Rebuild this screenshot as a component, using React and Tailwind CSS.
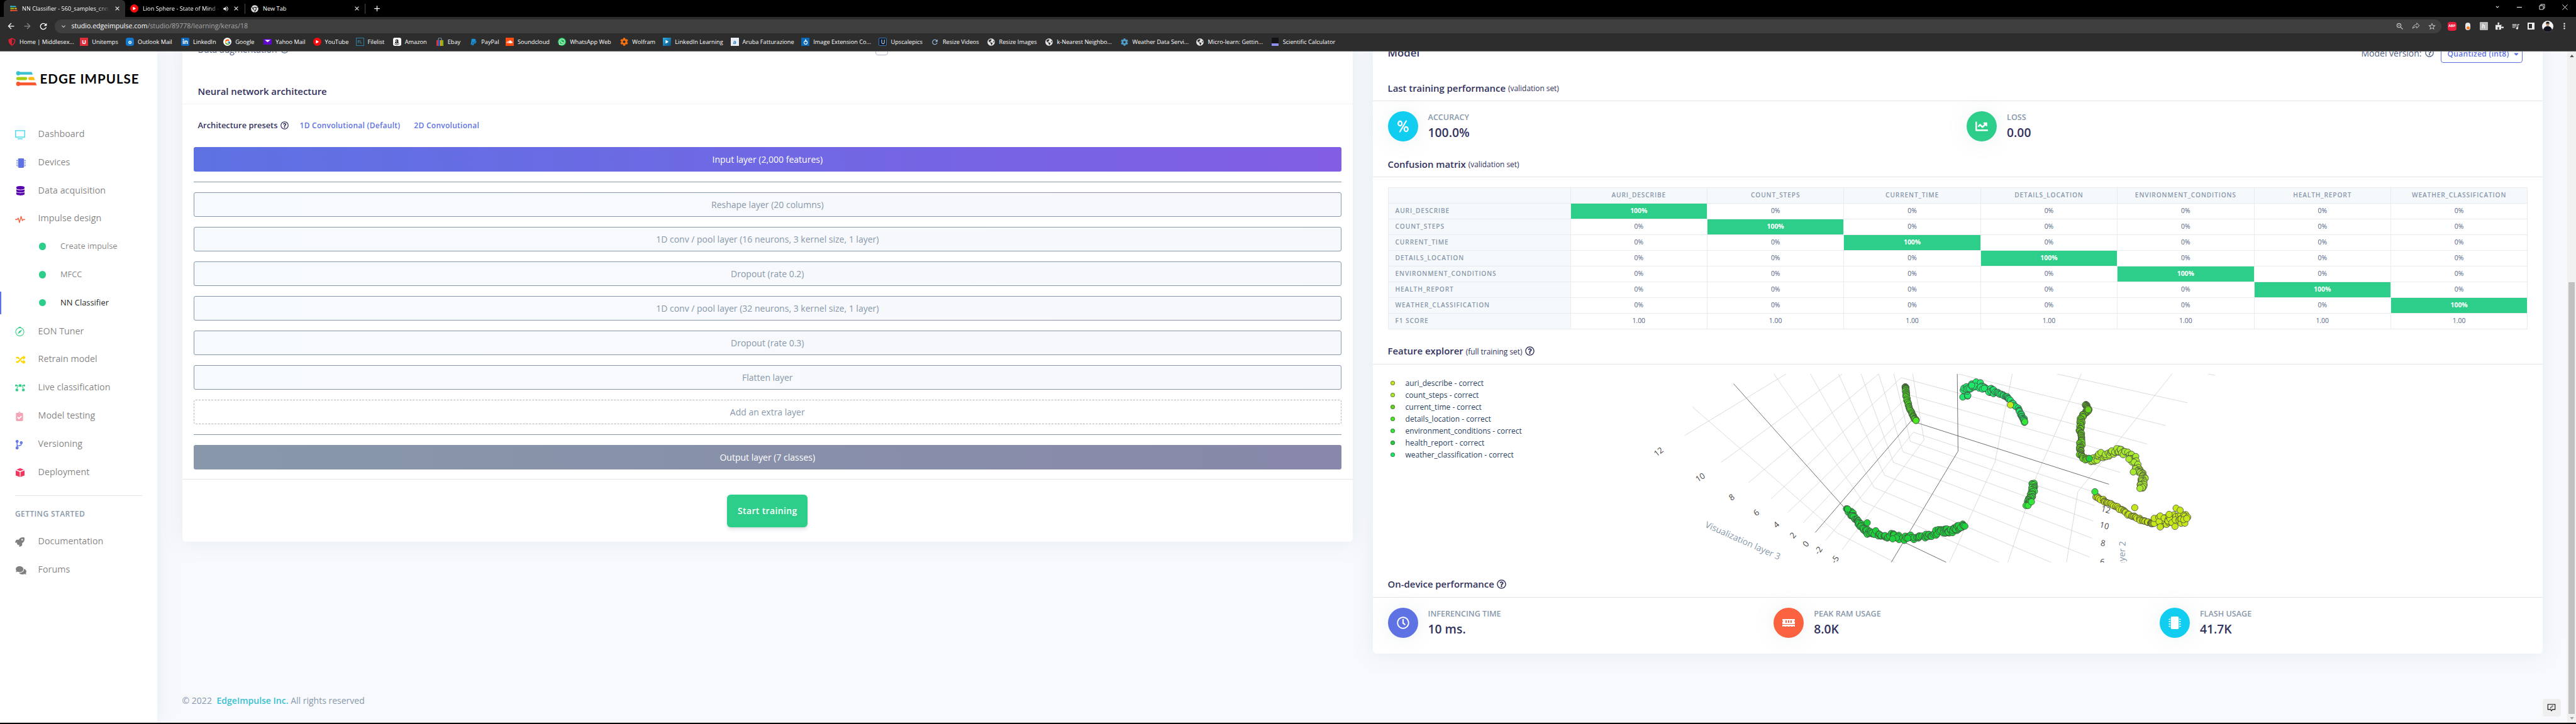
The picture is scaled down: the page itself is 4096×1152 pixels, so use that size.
import React from "react";
import {
  FaChartLine, FaRegClock, FaMemory, FaMicrochip, FaDatabase, FaRandom, FaRocket,
  FaClipboardCheck, FaCodeBranch, FaComments, FaChrome, FaPaypal, FaSoundcloud,
  FaWhatsapp, FaLinkedinIn, FaAmazon, FaPlay, FaGlobeAmericas, FaRegQuestionCircle, FaShieldAlt,
  FaPuzzlePiece, FaCaretDown, FaBezierCurve, FaCog,
} from "react-icons/fa";
import { FcGoogle } from "react-icons/fc";
import { BsCompass } from "react-icons/bs";
import {
  MdArrowBack, MdArrowForward, MdRefresh, MdZoomIn, MdStarBorder, MdQueueMusic, MdMoreVert,
  MdVolumeUp, MdClose, MdAdd, MdKeyboardArrowDown,
} from "react-icons/md";
import { PiShareFat } from "react-icons/pi";

/* ---------- browser chrome ---------- */

function EdgeGlyph({ className }) {
  return (
    <svg viewBox="0 0 42 30" preserveAspectRatio="none" className={className}>
      <circle cx="5" cy="4.5" r="4.2" fill="#3bc1cf" />
      <path d="M5 2h27l2 5.3H5z" fill="#3bc1cf" />
      <rect x="1" y="12" width="22" height="6" rx="3" fill="#a6cf13" />
      <path d="M28 12h8l2.3 6H28a3 3 0 0 1 0-6z" fill="#feb912" />
      <circle cx="5" cy="25.5" r="4.2" fill="#fb552e" />
      <path d="M5 22.8h34.5l2.5 5.6H5z" fill="#fb552e" />
    </svg>
  );
}

const Sq = ({ c, t, children }) => (
  <span className={"flex h-[13px] w-[13px] items-center justify-center text-[9px] leading-none font-bold text-white " + c}>
    {t}
    {children}
  </span>
);

const bookmarks = [
  { n: "Home | Middlesex...", x: 15, i: <FaShieldAlt className="h-[13px] w-[12px] text-[#dc1f34]" /> },
  { n: "Unitemps", x: 159, i: <Sq c="bg-[#e12d3a]" t="U" /> },
  { n: "Outlook Mail", x: 250, i: <Sq c="bg-[#1279cf] rounded-sm" t="o" /> },
  { n: "LinkedIn", x: 360, i: <Sq c="bg-[#0f6ac0] rounded-[2px]"><FaLinkedinIn /></Sq> },
  { n: "Google", x: 444, i: <span className="flex h-[13px] w-[13px] items-center justify-center rounded-full bg-white"><FcGoogle className="h-[10px] w-[10px]" /></span> },
  { n: "Yahoo Mail", x: 524, i: <svg viewBox="0 0 13 13" className="h-[13px] w-[13px]"><path d="M0 2h13v9H0z" fill="#5f07cf" /><path d="M2 3.500h9L6.500 7z" fill="#fff" /></svg> },
  { n: "YouTube", x: 622, i: <Sq c="bg-[#f60c0c] rounded-full"><FaPlay className="h-[5px] w-[5px]" /></Sq> },
  { n: "Filelist", x: 707, i: <span className="flex h-[13px] w-[13px] items-center justify-center border border-[#2c7ea8] text-[7px] leading-none text-[#46a0cc]">FL</span> },
  { n: "Amazon", x: 781, i: <span className="flex h-[13px] w-[13px] items-center justify-center rounded-[3px] bg-white text-black"><FaAmazon className="h-[10px] w-[10px]" /></span> },
  { n: "Ebay", x: 866, i: <svg viewBox="0 0 13 13" className="h-[13px] w-[13px]"><path d="M1 4h3v9H1z" fill="#e53238" /><path d="M4 4h3v9H4z" fill="#0a64d2" /><path d="M7 4h2.500v9H7z" fill="#f5af02" /><path d="M9.500 4H12v9H9.500z" fill="#86b817" /><path d="M4 4V2.500a2.500 2.500 0 0 1 5 0V4" fill="none" stroke="#9ab" /></svg> },
  { n: "PayPal", x: 933, i: <FaPaypal className="h-[12px] w-[12px] text-[#1a8fd8]" /> },
  { n: "Soundcloud", x: 1005, i: <Sq c="bg-[#ff4c10]"><FaSoundcloud className="h-[9px] w-[10px]" /></Sq> },
  { n: "WhatsApp Web", x: 1109, i: <Sq c="bg-[#1fc15a] rounded-full"><FaWhatsapp className="h-[11px] w-[11px]" /></Sq> },
  { n: "Wolfram", x: 1233, i: <FaCog className="h-[13px] w-[13px] text-[#f4700e]" /> },
  { n: "LinkedIn Learning", x: 1318, i: <Sq c="bg-gradient-to-br from-[#2fb1e8] to-[#0b4f7c]"><FaPlay className="h-[5px] w-[5px]" /></Sq> },
  { n: "Aruba Fatturazione", x: 1452, i: <span className="flex h-[13px] w-[13px] items-center justify-center bg-[#e8eef4] text-[9px] leading-none font-bold text-[#2a83c0]">a</span> },
  { n: "Image Extension Co...", x: 1593, i: <Sq c="bg-[#0968b8]"><svg viewBox="0 0 10 10" className="h-[10px] w-[10px]"><circle cx="5" cy="5.800" r="2.600" fill="none" stroke="#fff" strokeWidth="1.200" /><path d="M5 .5v4" stroke="#fff" strokeWidth="1.400" /></svg></Sq> },
  { n: "Upscalepics", x: 1747, i: <span className="flex h-[13px] w-[13px] items-center justify-center rounded-[2px] border border-[#3e78b4] bg-[#0c1a2c] text-[9px] leading-none text-white">U</span> },
  { n: "Resize Videos", x: 1850, i: <MdRefresh className="h-[14px] w-[13px] text-[#9ec4ea]" /> },
  { n: "Resize Images", x: 1962, i: <FaGlobeAmericas className="h-[12px] w-[12px] text-[#e4e4e4]" /> },
  { n: "k-Nearest Neighbo...", x: 2077, i: <FaGlobeAmericas className="h-[12px] w-[12px] text-[#e4e4e4]" /> },
  { n: "Weather Data Servi...", x: 2227, i: <FaCog className="h-[12px] w-[12px] text-[#4f9dcb]" /> },
  { n: "Micro-learn: Gettin...", x: 2377, i: <FaGlobeAmericas className="h-[12px] w-[12px] text-[#e4e4e4]" /> },
  { n: "Scientific Calculator", x: 2526, i: <svg viewBox="0 0 13 13" className="h-[13px] w-[13px]"><rect x="1" width="11" height="13" rx="1" fill="#141418" /><rect x="1" y="9" width="11" height="4" fill="#8f8ff0" /></svg> },
];

function BrowserChrome() {
  return (
    <header className="h-[82.4px] w-full shrink-0 border-b border-[#6b6b6b] bg-[#2d2d2d] text-white">
      <div className="flex h-[27.2px] items-center justify-between bg-black text-[9.200px]">
        <div className="flex h-full items-center">
          <div className="ml-[6px] flex h-full w-[193px] items-center rounded-t-md bg-[#2d2d2d] pl-[10px]">
            <EdgeGlyph className="h-[9px] w-[12px]" />
            <span className="ml-[7px] w-[140px] overflow-hidden whitespace-nowrap [mask-image:linear-gradient(90deg,#000_85%,transparent)]">NN Classifier - 560_samples_cnn_</span>
            <MdClose className="ml-[6px] h-[11px] w-[11px]" />
          </div>
          <div className="flex h-full w-[190px] items-center pl-[8px]">
            <Sq c="bg-[#f60c0c] rounded-full"><FaPlay className="h-[5px] w-[5px]" /></Sq>
            <span className="ml-[7px] w-[123px] overflow-hidden whitespace-nowrap [mask-image:linear-gradient(90deg,#000_85%,transparent)]">Lion Sphere - State of Mind -</span>
            <MdVolumeUp className="ml-[4px] h-[10px] w-[10px]" />
            <MdClose className="ml-[6px] h-[11px] w-[11px]" />
          </div>
          <div className="flex h-[16px] w-[192px] items-center border-x border-[#4b4b4b] pl-[9px]">
            <FaChrome className="h-[12px] w-[12px] text-[#dcdcdc]" />
            <span className="ml-[7px] w-[144px]">New Tab</span>
            <MdClose className="h-[11px] w-[11px]" />
          </div>
          <MdAdd className="ml-[11px] h-[15px] w-[15px]" />
        </div>
        <div className="flex h-full items-center gap-[26.8px] pr-[13px] pb-[5px]">
          <MdKeyboardArrowDown className="h-[12px] w-[10px]" />
          <span className="h-px w-[8px] bg-white" />
          <svg viewBox="0 0 10 10" className="h-[10px] w-[10px]" fill="none" stroke="#fff" strokeWidth=".9"><path d="M1 3h6v6H1zM3 3V1h6v6H7" /></svg>
          <svg viewBox="0 0 10 10" className="h-[9px] w-[9px]" stroke="#fff"><path d="M.5.5l9 9M9.500.5l-9 9" /></svg>
        </div>
      </div>
      <div className="flex h-[29.6px] items-center">
        <div className="flex w-[87px] shrink-0 items-center gap-[10.500px] pl-[10px]">
          <MdArrowBack className="h-[15px] w-[15px]" />
          <MdArrowForward className="h-[15px] w-[15px] text-[#8a8a8a]" />
          <MdRefresh className="h-[16px] w-[16px]" />
        </div>
        <div className="flex h-[22.4px] w-[3795px] shrink-0 items-center rounded-full bg-[#3f3f3f] pl-[8px] text-[10.600px]">
          <MdKeyboardArrowDown className="h-[12px] w-[12px] text-[#ccc]" />
          <span className="ml-[6.500px] w-[300px] whitespace-nowrap text-[#a8a8a8]"><span className="text-white">studio.edgeimpulse.com</span>/studio/89778/learning/keras/18</span>
          <div className="ml-auto flex items-center gap-[12.200px] pr-[8px] text-[#c4c4c4]">
            <MdZoomIn className="h-[14px] w-[14px]" />
            <PiShareFat className="h-[13px] w-[13px]" />
            <MdStarBorder className="h-[14px] w-[14px]" />
          </div>
        </div>
        <div className="flex items-center gap-[12px] pl-[10px] text-[#e6e6e6]">
          <span className="flex h-[13.500px] w-[13.500px] items-center justify-center rounded-[4px] bg-[#ee1c3d] text-[5.500px] leading-none font-bold text-white">ABP</span>
          <span className="flex h-[13px] w-[13px] items-center justify-center"><span className="flex h-[12px] w-[8px] items-end justify-center rounded-full bg-[#e8e8e8] pb-px"><span className="h-[5px] w-[5px] rounded-full bg-[#f47c20]" /></span></span>
          <span className="flex h-[13px] w-[13px] items-center justify-center rounded-[1px] bg-[#b9b9b9] font-serif text-[11px] leading-none text-white italic">h</span>
          <FaPuzzlePiece className="h-[13px] w-[13px]" />
          <MdQueueMusic className="h-[16px] w-[14px]" />
          <span className="h-[11px] w-[11.500px] border-2 border-r-[4px] border-[#efefef]" />
          <svg viewBox="0 0 18 18" className="h-[18px] w-[18px]">
            <circle cx="9" cy="9" r="9" fill="#f4f2f2" />
            <path d="M2 14.500c1-4 4-6 7-6s6 2 7 6a9 9 0 0 1-14 0z" fill="#10131d" />
            <circle cx="9" cy="5.500" r="2.600" fill="#b98a72" />
            <path d="M6.200 4.500C6 2.500 7.500 1.500 9 1.500s3 1 2.800 3z" fill="#141414" />
          </svg>
          <MdMoreVert className="-ml-[2px] h-[15px] w-[15px]" />
        </div>
      </div>
      <div className="flex h-[20px] items-center pl-[12px] text-[9.200px]">
        {bookmarks.map((b, k) => (
          <div key={b.n} className="flex shrink-0 items-center gap-[6px] whitespace-nowrap" style={{ width: ((bookmarks[k + 1]?.x ?? b.x + 150) - b.x) * 0.8 }}>
            <span className="flex w-[13px] justify-center">{b.i}</span>
            <span>{b.n}</span>
          </div>
        ))}
      </div>
    </header>
  );
}

/* ---------- sidebar ---------- */

const TvIcon = () => (
  <svg viewBox="0 0 16 15" className="h-[15px] w-[16px]" fill="none" stroke="#2bd2f1" strokeWidth="1.200"><path d="M.8.8h14.400v10.400H.8zM4 13.800h8" /></svg>
);
const PulseIcon = () => (
  <svg viewBox="0 0 16 12" className="h-[12px] w-[16px]" fill="none" stroke="#fb6340" strokeWidth="1.400" strokeLinejoin="round" strokeLinecap="round"><path d="M.7 6.200h2.600L5 4l2 7 2.500-9.800L11.500 8l1.500-1.800h2.300" /></svg>
);
const BoxIcon = () => (
  <svg viewBox="0 0 14 14" className="ml-[1px] h-[14px] w-[14px]" fill="#f5365c"><path d="M7 0l6 2.200L7 4.600 1 2.200zM0 3.400l6.400 2.500V14L0 11.500zM14 3.400L7.600 5.900V14l6.400-2.500z" /></svg>
);

const nav = [
  ["Dashboard", <TvIcon />],
  ["Devices", <FaMicrochip className="ml-[2px] h-[15px] w-[15px] text-[#5e72e4]" />],
  ["Data acquisition", <FaDatabase className="ml-[2px] h-[15px] w-[13px] text-[#5603ad]" />],
  ["Impulse design", <PulseIcon />],
  ["Create impulse", null],
  ["MFCC", null],
  ["NN Classifier", null],
  ["EON Tuner", <BsCompass className="h-[15px] w-[15px] text-[#2dce89]" />],
  ["Retrain model", <FaRandom className="ml-[1px] h-[15px] w-[16px] text-[#ffd600]" />],
  ["Live classification", <FaBezierCurve className="h-[14px] w-[16px] text-[#2dce89]" />],
  ["Model testing", <FaClipboardCheck className="h-[15px] w-[14px] text-[#f3a4b5]" />],
  ["Versioning", <FaCodeBranch className="h-[15px] w-[13px] text-[#5e72e4]" />],
  ["Deployment", <BoxIcon />],
];

function NavRow({ label, icon }) {
  return (
    <div className="flex h-[44.800px] items-center pl-[24px] text-[14.300px] text-black/50">
      <span className="flex w-[36.600px] pt-[3px]">{icon}</span>
      {label}
    </div>
  );
}

function Sidebar() {
  return (
    <aside className="z-10 w-[250.400px] shrink-0 bg-white shadow-[0_0_32px_rgba(136,152,170,0.15)]">
      <div className="flex h-[108px] items-center pb-[22px] pl-[25px]">
        <EdgeGlyph className="h-[24px] w-[33.500px]" />
        <span className="ml-[5px] font-['Lato'] text-[20.500px] font-bold tracking-[1px] whitespace-nowrap text-black">EDGE IMPULSE</span>
      </div>
      <div>
        {nav.map(([label, icon]) =>
          icon ? (
            <NavRow key={label} label={label} icon={icon} />
          ) : (
            <div key={label} className="flex h-[44.800px] items-center">
              <span className={label === "NN Classifier" ? "h-[36px] w-[2px] bg-[#5e72e4]" : "w-[2px]"} />
              <span className="ml-[59.500px] h-[11.500px] w-[11.500px] rounded-full bg-[#2dce89]" />
              <span className={label === "NN Classifier" ? "ml-[23px] text-[12.900px] text-black/90" : "ml-[23px] text-[12.900px] text-black/50"}>{label}</span>
            </div>
          )
        )}
      </div>
      <div className="mx-[24px] mt-[15.500px] border-t border-black/10" />
      <div className="mt-[17px] flex h-[24px] items-center pl-[24px] text-[12px] font-semibold tracking-[0.400px] text-[#8898aa]">GETTING STARTED</div>
      <div className="mt-[8.500px]">
        <NavRow label="Documentation" icon={<FaRocket className="h-[15px] w-[15px] text-[#7f7f7f]" />} />
        <NavRow label="Forums" icon={<FaComments className="ml-[1px] h-[15px] w-[17px] text-[#7f7f7f]" />} />
      </div>
    </aside>
  );
}

/* ---------- left card ---------- */

const layers = [
  "Reshape layer (20 columns)",
  "1D conv / pool layer (16 neurons, 3 kernel size, 1 layer)",
  "Dropout (rate 0.2)",
  "1D conv / pool layer (32 neurons, 3 kernel size, 1 layer)",
  "Dropout (rate 0.3)",
  "Flatten layer",
];

function ArchitectureCard() {
  return (
    <section className="h-[800.400px] w-[1861.400px] overflow-hidden rounded-md bg-white">
      <div className="flex h-[32px] items-center pl-[25px] text-[14px] text-[#525f7f]">
        Data augmentation
        <FaRegQuestionCircle className="ml-[5px] h-[13px] w-[13px]" />
        <span className="ml-[933px] h-[20px] w-[20px] rounded border border-[#b4b8c8] bg-white" />
      </div>
      <div className="mt-[32px] flex h-[40px] items-center border-b border-black/5 pl-[25px] text-[14.900px] font-semibold text-[#32325d]">Neural network architecture</div>
      <div className="flex h-[67.600px] items-center pl-[25px] text-[12.900px] text-[#32325d]">
        <span className="font-semibold">Architecture presets</span>
        <FaRegQuestionCircle className="ml-[4.500px] h-[13px] w-[13px]" />
        <span className="ml-[17.500px] text-[12px] font-semibold tracking-[0.270px] text-[#5e72e4]">1D Convolutional (Default)</span>
        <span className="ml-[22px] text-[12px] font-semibold tracking-[0.270px] text-[#5e72e4]">2D Convolutional</span>
      </div>
      <div className="flex flex-col gap-[16px] px-[18px] text-center text-[14px] leading-[39px] text-[#8898aa]">
        <div className="h-[39px] rounded-[3px] bg-[linear-gradient(87deg,#5e72e4_0%,#825ee4_100%)] text-white">Input layer (2,000 features)</div>
        <div className="h-px bg-[#8898aa]" />
        {layers.map((l) => (
          <div key={l} className="h-[39px] rounded-[3px] border border-[#8898aa] bg-[linear-gradient(87deg,#f7fafc_0%,#f7f8fc_100%)] leading-[37px]">{l}</div>
        ))}
        <div className="h-[39px] rounded-[3px] border border-dashed border-[#adb5bd] leading-[37px]">Add an extra layer</div>
        <div className="h-px bg-[#8898aa]" />
        <div className="h-[39px] rounded-[3px] bg-[linear-gradient(87deg,#8898aa_0%,#8888aa_100%)] text-white">Output layer (7 classes)</div>
      </div>
      <div className="mt-[15.500px] flex h-[100px] items-center justify-center border-t border-black/10">
        <span className="flex h-[52px] w-[128px] items-center justify-center rounded-md bg-[#2dce89] text-[14px] font-semibold tracking-[0.350px] text-white shadow-[0_4px_6px_rgba(50,50,93,0.11),0_1px_3px_rgba(0,0,0,0.08)]">Start training</span>
      </div>
    </section>
  );
}

/* ---------- right card ---------- */

function SectionTitle({ title, note, help }) {
  return (
    <div className="flex h-[41px] items-center border-b border-black/10 pl-[24px] text-[14.900px] text-[#32325d]">
      <span className="font-semibold">{title}</span>
      {note && <span className="ml-[4px] pt-[2px] text-[11.900px]">{note}</span>}
      {help && <FaRegQuestionCircle className="ml-[4px] h-[15px] w-[15px]" />}
    </div>
  );
}

const PercentIcon = () => (
  <svg viewBox="0 0 20 20" className="h-[20px] w-[20px]" fill="none" stroke="#fff" strokeWidth="2.200" strokeLinecap="round">
    <ellipse cx="5.200" cy="5.500" rx="3" ry="3.600" />
    <ellipse cx="14.800" cy="14.500" rx="3" ry="3.600" />
    <path d="M15 1.500L5 18.500" />
  </svg>
);

function Stat({ color, icon, label, value }) {
  return (
    <div className="flex flex-1 items-center">
      <span className={"flex h-[48px] w-[48px] items-center justify-center rounded-full text-[20px] text-white shadow-[0_0_32px_rgba(136,152,170,0.15)] " + color}>{icon}</span>
      <div className="ml-[16px]">
        <div className="text-[12.600px] leading-[20px] font-semibold text-[#8898aa] uppercase">{label}</div>
        <div className="text-[19.300px] leading-[28px] font-semibold text-[#32325d]">{value}</div>
      </div>
    </div>
  );
}

const classes = ["auri_describe", "count_steps", "current_time", "details_location", "environment_conditions", "health_report", "weather_classification"];

function Matrix() {
  return (
    <div className="mx-[24px] mt-[16px] grid grid-cols-[290px_repeat(7,217.400px)] border-t border-l border-[#e9ecef] text-[10.400px] text-[#525f7f]">
      <div className="h-[25px] border-r border-b border-[#e9ecef] bg-[#f6f9fc]" />
      {classes.map((c) => (
        <div key={c} className="flex h-[25px] items-center justify-center border-r border-b border-[#e9ecef] bg-[#f6f9fc] text-[10.200px] font-semibold tracking-[0.850px] text-[#8898aa] uppercase">{c}</div>
      ))}
      {[...classes, "F1 score"].map((row, r) => (
        <React.Fragment key={row}>
          <div className="flex h-[25px] items-center border-r border-b border-[#e9ecef] bg-[#f6f9fc] pl-[11px] text-[10.200px] font-semibold tracking-[0.850px] text-[#8898aa] uppercase">{row}</div>
          {classes.map((c, k) => (
            <div key={c} className={r === k ? "flex h-[25px] items-center justify-center border-r border-b border-[#e9ecef] bg-[#2dce89] font-bold text-white" : "flex h-[25px] items-center justify-center border-r border-b border-[#e9ecef]"}>
              {r === 7 ? "1.00" : r === k ? "100%" : "0%"}
            </div>
          ))}
        </React.Fragment>
      ))}
    </div>
  );
}

/* The scene is described on a stretched grid; sx / sy turn it into drawing pixels. */
const sx = (x) => x * 0.5867;
const sy = (y) => (y - 72) * 0.26667;
const path = (pts) => pts.map(([x, y], i) => (i ? "L" : "M") + sx(x).toFixed(1) + " " + sy(y).toFixed(1)).join("");

const gridLines = [
  [[409, 72], [134, 440]], [[561, 72], [233, 600]], [[660, 72], [307, 721]], [[721, 94], [368, 818]],
  [[743, 198], [414, 898]], [[745, 285], [455, 962]], [[754, 420], [517, 1064]], [[783, 465], [561, 1121]],
  [[155, 268], [548, 1022], [703, 1196]], [[376, 72], [617, 833], [985, 1196]], [[475, 72], [648, 750], [1127, 1196]],
  [[551, 72], [676, 676], [1232, 1165]], [[612, 72], [700, 600], [1238, 1052]], [[660, 72], [726, 537], [1242, 950]],
  [[701, 72], [746, 475], [1246, 858]], [[752, 72], [783, 465]], [[754, 420], [1264, 792]],
  [[1143, 72], [1497, 244]], [[876, 72], [1438, 380]], [[721, 94], [1388, 490]], [[743, 198], [1350, 578]], [[745, 285], [1315, 660]],
  [[1022, 72], [975, 600], [852, 1196]], [[1209, 72], [1088, 680], [1010, 1196]], [[1455, 72], [1200, 775], [1169, 1196]],
  [[1552, 72], [1572, 80]],
];
const axisLines = [
  [[267, 131], [570, 878]], [[748, 352], [488, 1018]], [[748, 352], [1284, 730]],
  [[873, 72], [875, 533], [694, 1196]], [[729, 1076], [843, 1196]],
];

const clusters = [
  { c: "#4ae81e", n: 46, j: [3, 3], p: [[733, 148], [733, 165], [735, 210], [742, 270], [752, 320], [761, 350]] },
  { c: "#1ee86a", n: 46, j: [16, 34], p: [[893, 200], [902, 150], [925, 135], [945, 160], [975, 180]] },
  { c: "#1ee86a", n: 36, j: [4, 8], p: [[975, 180], [1000, 200], [1015, 225], [1040, 285], [1050, 330], [1056, 358]] },
  { c: "#66d41a", n: 90, j: [7, 8], p: [[1220, 252], [1228, 285], [1212, 320], [1206, 380], [1207, 440], [1208, 500], [1206, 550], [1222, 585]] },
  { c: "#a8ea2e", n: 70, j: [20, 34], p: [[1237, 590], [1247, 570], [1280, 550], [1310, 530], [1335, 545], [1350, 590], [1362, 640]] },
  { c: "#a8ea2e", n: 36, j: [12, 10], p: [[1355, 640], [1376, 665], [1377, 710], [1371, 755]] },
  { c: "#34e83a", n: 44, j: [9, 10], p: [[1079, 725], [1078, 770], [1070, 820], [1061, 855]] },
  { c: "#c5e81a", n: 60, j: [6, 10], p: [[1248, 805], [1275, 835], [1310, 870], [1345, 920], [1380, 950], [1405, 965]] },
  { c: "#c5e81a", n: 50, j: [22, 56], p: [[1410, 965], [1440, 940], [1470, 940], [1490, 935]] },
  { c: "#1ed13c", n: 44, j: [9, 16], p: [[576, 882], [595, 930], [612, 975], [630, 1015]] },
  { c: "#1ed13c", n: 96, j: [8, 34], p: [[630, 1015], [680, 1035], [735, 1052], [790, 1040], [830, 1010], [860, 1002], [893, 980]] },
];
const singles = [
  [761, 350, "#4ae81e"], [912, 140, "#1ee86a"], [1017, 257, "#c5e81a"], [1056, 358, "#34e83a"], [1228, 285, "#66d41a"],
  [1231, 577, "#1ed13c"], [1338, 580, "#a8ea2e"], [1350, 657, "#a8ea2e"], [1368, 755, "#a8ea2e"], [1074, 835, "#34e83a"],
  [1246, 775, "#34e83a"], [1354, 870, "#c5e81a"], [1466, 873, "#c5e81a"], [1477, 885, "#c5e81a"], [1447, 910, "#c5e81a"],
  [1423, 985, "#c5e81a"], [1463, 982, "#c5e81a"], [1495, 935, "#c5e81a"], [576, 878, "#1ed13c"], [629, 960, "#1ed13c"],
  [708, 1050, "#1ed13c"], [739, 1052, "#1ed13c"], [698, 1056, "#1ed13c"],
];

function scatter() {
  let seed = 7;
  const rnd = () => {
    seed = (seed * 16807) % 2147483647;
    return seed / 2147483647;
  };
  const dots = [];
  clusters.forEach(({ c, n, j, p }) => {
    for (let i = 0; i < n; i++) {
      const t = (i / (n - 1)) * (p.length - 1);
      const k = Math.min(Math.floor(t), p.length - 2);
      const f = t - k;
      dots.push([
        p[k][0] + (p[k + 1][0] - p[k][0]) * f + (rnd() - 0.5) * j[0],
        p[k][1] + (p[k + 1][1] - p[k][1]) * f + (rnd() - 0.5) * j[1],
        c,
      ]);
    }
  });
  return dots.concat(singles);
}
const dots = scatter();

const ticks = [
  ["12", 63, 535, -38], ["10", 176, 688, -33], ["8", 261, 806, -35], ["6", 328, 898, -38], ["4", 382, 970, -42],
  ["2", 427, 1033, -48], ["0", 462, 1085, -50], ["-2", 496, 1124, -55], ["-5", 541, 1178, -55],
  ["12", 1276, 880, 16], ["10", 1272, 975, 14], ["8", 1268, 1080, 10], ["6", 1266, 1192, 8],
];

function FeaturePlot() {
  return (
    <svg width="930" height="300" className="overflow-hidden font-['Open_Sans']">
      <g fill="none" stroke="#d2d2d2" strokeWidth="0.800">
        {gridLines.map((l, i) => <path key={i} d={path(l)} />)}
      </g>
      <g fill="none" stroke="#4d4d4d" strokeWidth="0.800">
        {axisLines.map((l, i) => <path key={i} d={path(l)} />)}
      </g>
      {ticks.map(([t, x, y, a], i) => (
        <text key={i} transform={`translate(${sx(x)} ${sy(y)}) rotate(${a})`} textAnchor="middle" dominantBaseline="central" fontSize="13" fill="#444">{t}</text>
      ))}
      <text transform={`translate(${sx(188)} ${sy(985)}) rotate(24)`} fontSize="14" fill="#8898aa">Visualization layer 3</text>
      <text transform={`translate(${sx(1329)} ${sy(1070)}) rotate(-88)`} textAnchor="end" fontSize="14" fill="#8898aa">Visualization layer 2</text>
      <g stroke="#444" strokeWidth="0.800">
        {dots.map(([x, y, c], i) => <circle key={i} cx={sx(x)} cy={sy(y)} r="5.100" fill={c} />)}
      </g>
    </svg>
  );
}

const legend = [
  ["auri_describe - correct", "bg-[#c5e81a]"], ["count_steps - correct", "bg-[#a8ea2e]"], ["current_time - correct", "bg-[#66d41a]"],
  ["details_location - correct", "bg-[#4ae81e]"], ["environment_conditions - correct", "bg-[#34e83a]"], ["health_report - correct", "bg-[#1ed13c]"],
  ["weather_classification - correct", "bg-[#1ee86a]"],
];

function ModelCard() {
  return (
    <section className="h-[978px] w-[1860px] rounded-md bg-white">
      <div className="flex h-[44px] items-center pr-[32px] pl-[24px]">
        <span className="text-[16.800px] font-semibold text-[#32325d]">Model</span>
        <span className="ml-auto text-[14px] text-[#525f7f]">Model version:</span>
        <FaRegQuestionCircle className="ml-[5px] h-[14px] w-[14px] text-[#525f7f]" />
        <span className="ml-[11px] flex h-[31px] w-[130px] items-center rounded border border-[#5e72e4] pt-[3px] pl-[10px] text-[12px] font-semibold tracking-[0.300px] text-[#5e72e4]">
          Quantized (int8)
          <FaCaretDown className="ml-[6px] h-[12px] w-[10px]" />
        </span>
      </div>
      <div className="mt-[14px]"><SectionTitle title="Last training performance" note="(validation set)" /></div>
      <div className="-mr-[5px] flex h-[80px] pl-[24px]">
        <Stat color="bg-[#11cdef]" icon={<PercentIcon />} label="Accuracy" value="100.0%" />
        <Stat color="bg-[#2dce89]" icon={<FaChartLine />} label="Loss" value="0.00" />
      </div>
      <SectionTitle title="Confusion matrix" note="(validation set)" />
      <Matrix />
      <div className="mt-[14.500px]"><SectionTitle title="Feature explorer" note="(full training set)" help /></div>
      <div className="flex h-[330px] pt-[15.800px] pl-[24px]">
        <div className="w-[393.500px] pt-[5px] text-[12px] text-[#2a3f5f]">
          {legend.map(([l, c]) => (
            <div key={l} className="flex h-[19px] items-center pl-[4px]">
              <span className={"h-[7px] w-[7px] rounded-full border border-[#444]/60 " + c} />
              <span className="ml-[17px]">{l}</span>
            </div>
          ))}
        </div>
        <FeaturePlot />
      </div>
      <SectionTitle title="On-device performance" help />
      <div className="-mr-[5px] flex h-[80px] pl-[24px]">
        <Stat color="bg-[#5e72e4]" icon={<FaRegClock />} label="Inferencing time" value="10 ms." />
        <Stat color="bg-[#fb6340]" icon={<FaMemory />} label="Peak RAM usage" value="8.0K" />
        <Stat color="bg-[#11cdef]" icon={<FaMicrochip />} label="Flash usage" value="41.7K" />
      </div>
    </section>
  );
}

export default function App() {
  return (
    <div className="flex h-[1152px] w-[4096px] flex-col overflow-hidden bg-black font-['Open_Sans',sans-serif]">
      <BrowserChrome />
      <div className="relative flex h-[1068px] overflow-hidden bg-[#f7f9fd]">
        <Sidebar />
        <div className="-mt-[20.400px] flex flex-1 pl-[39.200px]">
          <div>
            <div className="rounded-md shadow-[0_0_32px_rgba(136,152,170,0.15)]"><ArchitectureCard /></div>
            <div className="mt-[243px] text-[14px] leading-[20px] text-[#8898aa]">
              © 2022 <span className="ml-[4px] font-semibold text-[#3bc1cf]">EdgeImpulse Inc.</span> All rights reserved
            </div>
          </div>
          <div className="ml-[31.600px] h-[978px] rounded-md shadow-[0_0_32px_rgba(136,152,170,0.15)]"><ModelCard /></div>
        </div>
        <div className="flex w-[13.600px] shrink-0 flex-col items-center bg-[#f1f1f1] pt-[5px]">
          <svg viewBox="0 0 8 5" className="h-[4px] w-[7px]" fill="#505050"><path d="M4 0l4 5H0z" /></svg>
          <span className="mt-[358px] h-[687px] w-[10.500px] bg-[#c1c1c1]" />
          <svg viewBox="0 0 8 5" className="mt-[5px] h-[4px] w-[7px]" fill="#a3a3a3"><path d="M4 5L0 0h8z" /></svg>
        </div>
        <div className="absolute right-[24px] bottom-[10px] flex h-[28px] w-[29.500px] items-center justify-center rounded bg-[#efefef]">
          <svg viewBox="0 0 14 13" className="h-[12px] w-[14px]" fill="none" stroke="#111" strokeWidth="1.200"><path d="M.8.8h12.400v8.800H8.500L7 12 5.500 9.600H.8z" /><path d="M5 7.500l.4-1.600L9 2.700l1 1-3.500 3.300z" strokeWidth=".8" /></svg>
        </div>
      </div>
    </div>
  );
}
